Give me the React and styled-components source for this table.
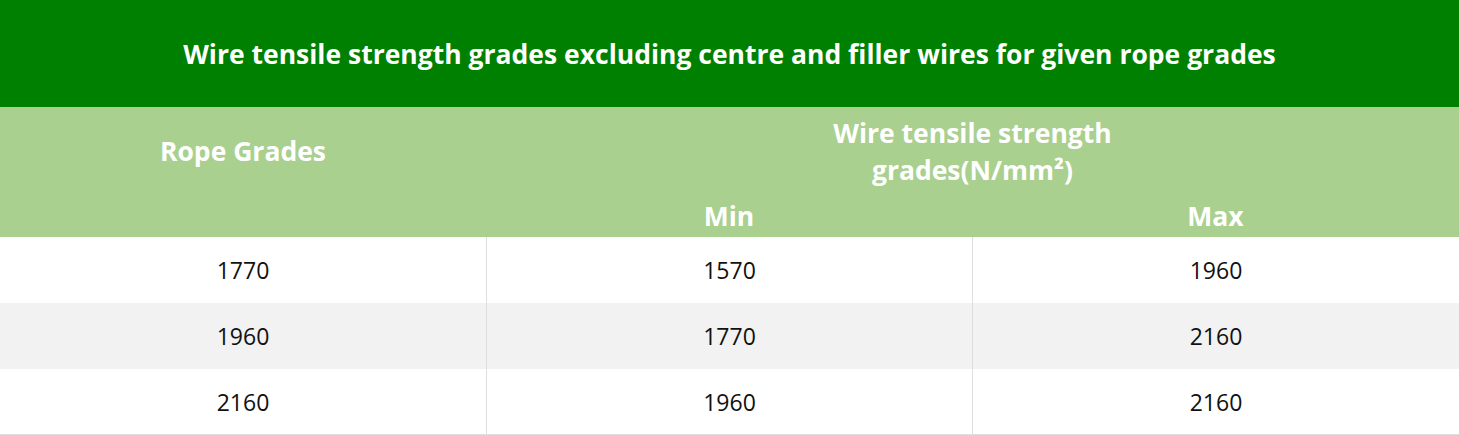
import React from "react";
import styled, { createGlobalStyle } from "styled-components";

const Global = createGlobalStyle`
  html, body { margin: 0; padding: 0; background: #fff; }
  body { font-family: "Open Sans", "Noto Sans", sans-serif; }
`;

const Table = styled.div`
  width: 1459px;
  display: grid;
  grid-template-columns: 486px 486px 487px;
  box-sizing: border-box;
`;

const Title = styled.div`
  grid-column: 1 / -1;
  height: 107px;
  background: #008000;
  color: #fff;
  font-weight: 700;
  font-size: 26.5px;
  display: flex;
  align-items: center;
  justify-content: center;
`;

const Head = styled.div`
  background: #a9d08e;
  color: #fff;
  font-weight: 700;
  font-size: 26.5px;
  display: flex;
  justify-content: center;
  text-align: center;
  line-height: ${(p) => p.$lh || 37}px;
  grid-column: ${(p) => p.$col || "auto"};
  grid-row: ${(p) => p.$row || "auto"};
  align-items: flex-start;
  padding-top: ${(p) => p.$pt || 0}px;
  height: ${(p) => p.$h || "auto"};
  box-sizing: border-box;
`;

const Wrap = styled.span`
  max-width: 300px;
`;

const Cell = styled.div`
  height: 66px;
  display: flex;
  align-items: center;
  justify-content: center;
  font-size: 23px;
  color: #111;
  background: ${(p) => (p.$alt ? "#f2f2f2" : "#fff")};
  border-left: ${(p) => (p.$first ? "none" : "1px solid #dedede")};
  border-bottom: ${(p) => (p.$last ? "1px solid #dedede" : "none")};
  box-sizing: border-box;
`;

const rows = [
  ["1770", "1570", "1960"],
  ["1960", "1770", "2160"],
  ["2160", "1960", "2160"],
];

export default function App() {
  return (
    <>
      <Global />
      <Table>
        <Title>Wire tensile strength grades excluding centre and filler wires for given rope grades</Title>
        <Head $col="1" $row="2 / span 2" $pt={26}>Rope Grades</Head>
        <Head $col="2 / span 2" $row="2" $pt={8} $h="93px">
          <Wrap>Wire tensile strength grades(N/mm²)</Wrap>
        </Head>
        <Head $col="2" $row="3" $h="37px" $lh={33}>Min</Head>
        <Head $col="3" $row="3" $h="37px" $lh={33}>Max</Head>
        {rows.map((r, i) =>
          r.map((v, j) => (
            <Cell key={`${i}-${j}`} $alt={i === 1} $first={j === 0} $last={i === rows.length - 1}>
              {v}
            </Cell>
          ))
        )}
      </Table>
    </>
  );
}
